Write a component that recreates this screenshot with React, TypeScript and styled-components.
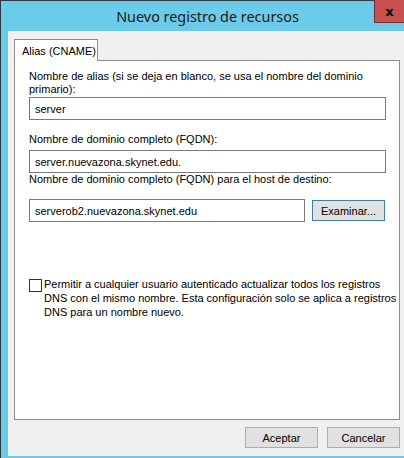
import React from "react";
import styled, { createGlobalStyle } from "styled-components";

const GlobalStyle = createGlobalStyle`
  html, body { margin: 0; padding: 0; background: #ffffff; }
  * { box-sizing: border-box; }
`;

const Window = styled.div`
  width: 404px;
  height: 458px;
  background: #6bcbe9;
  border-left: 1px solid #2f3a40;
  border-top: 1px solid #2f3a40;
  padding: 0 0 2px 7px;
  display: flex;
  flex-direction: column;
  font-family: "Liberation Sans", Arial, sans-serif;
  font-size: 11px;
  color: #000;
  white-space: nowrap;
`;

const TitleBar = styled.div`
  position: relative;
  height: 31px;
  margin-left: -7px;
  display: flex;
  align-items: center;
  justify-content: center;
`;

const Title = styled.div`
  font-family: "Noto Sans", "Open Sans", sans-serif;
  font-size: 14.4px;
  color: #1a1a1a;
  padding-left: 10px;
  padding-top: 1px;
`;

const CloseButton = styled.div`
  position: absolute;
  top: -1px;
  right: 0;
  width: 30px;
  height: 23px;
  background: #c75050;
  border-left: 1px solid #6b3535;
  border-bottom: 1px solid #6b3535;
  display: flex;
  align-items: center;
  justify-content: center;
  color: #000;
  font-family: "DejaVu Sans", sans-serif;
  font-weight: bold;
  font-size: 13px;
`;

const Body = styled.div`
  flex: 1;
  background: #f0f0f0;
  padding: 8px 4px 8px 6px;
  display: flex;
  flex-direction: column;
`;

const TabStrip = styled.div`
  display: flex;
  height: 21px;
`;

const Tab = styled.div`
  width: 84px;
  height: 22px;
  background: #fff;
  border: 1px solid #898c95;
  border-bottom: none;
  padding: 5px 0 0 7px;
  line-height: 13px;
  position: relative;
  z-index: 1;
`;

const Panel = styled.div`
  height: 360px;
  background: #fff;
  border: 1px solid #898c95;
  padding: 9px 13px 0 14px;
  display: flex;
  flex-direction: column;
`;

const Label = styled.div<{ $mt?: number }>`
  line-height: 13px;
  margin-top: ${(p) => p.$mt ?? 0}px;
`;

const Input = styled.div<{ $w?: number; $mt?: number }>`
  height: 23px;
  width: ${(p) => (p.$w ? `${p.$w}px` : "100%")};
  margin-top: ${(p) => p.$mt ?? 0}px;
  border: 1px solid #7a7a7a;
  background: #fff;
  padding: 0 0 0 5px;
  display: flex;
  align-items: center;
`;

const Row = styled.div<{ $mt?: number }>`
  display: flex;
  align-items: center;
  gap: 7px;
  margin-top: ${(p) => p.$mt ?? 0}px;
`;

const Button = styled.div<{ $focused?: boolean; $w?: number }>`
  width: ${(p) => p.$w ?? 73}px;
  height: 21px;
  background: #e1e1e1;
  border: 1px solid ${(p) => (p.$focused ? "#3c7fb1" : "#adadad")};
  display: flex;
  align-items: center;
  justify-content: center;
`;

const CheckRow = styled.div`
  display: flex;
  align-items: flex-start;
  gap: 2px;
  margin-top: 57px;
`;

const CheckBox = styled.div`
  width: 13px;
  height: 13px;
  border: 1px solid #333;
  background: #fff;
  flex-shrink: 0;
`;

const CheckText = styled.div`
  line-height: 14px;
  margin-top: -2px;
`;

const Footer = styled.div`
  display: flex;
  justify-content: flex-end;
  gap: 9px;
  margin-top: 7px;
`;

export default function App() {
  return (
    <>
      <GlobalStyle />
      <Window>
        <TitleBar>
          <Title>Nuevo registro de recursos</Title>
          <CloseButton>x</CloseButton>
        </TitleBar>
        <Body>
          <TabStrip>
            <Tab>Alias (CNAME)</Tab>
          </TabStrip>
          <Panel>
            <Label>
              Nombre de alias (si se deja en blanco, se usa el nombre del dominio
              <br />
              primario):
            </Label>
            <Input $mt={1}>server</Input>
            <Label $mt={13}>Nombre de dominio completo (FQDN):</Label>
            <Input $mt={4}>server.nuevazona.skynet.edu.</Input>
            <Label $mt={0}>Nombre de dominio completo (FQDN) para el host de destino:</Label>
            <Row $mt={13}>
              <Input $w={276}>serverob2.nuevazona.skynet.edu</Input>
              <Button $focused $w={73}>Examinar...</Button>
            </Row>
            <CheckRow>
              <CheckBox />
              <CheckText>
                Permitir a cualquier usuario autenticado actualizar todos los registros
                <br />
                DNS con el mismo nombre. Esta configuración solo se aplica a registros
                <br />
                DNS para un nombre nuevo.
              </CheckText>
            </CheckRow>
          </Panel>
          <Footer>
            <Button $w={73}>Aceptar</Button>
            <Button $w={73}>Cancelar</Button>
          </Footer>
        </Body>
      </Window>
    </>
  );
}
